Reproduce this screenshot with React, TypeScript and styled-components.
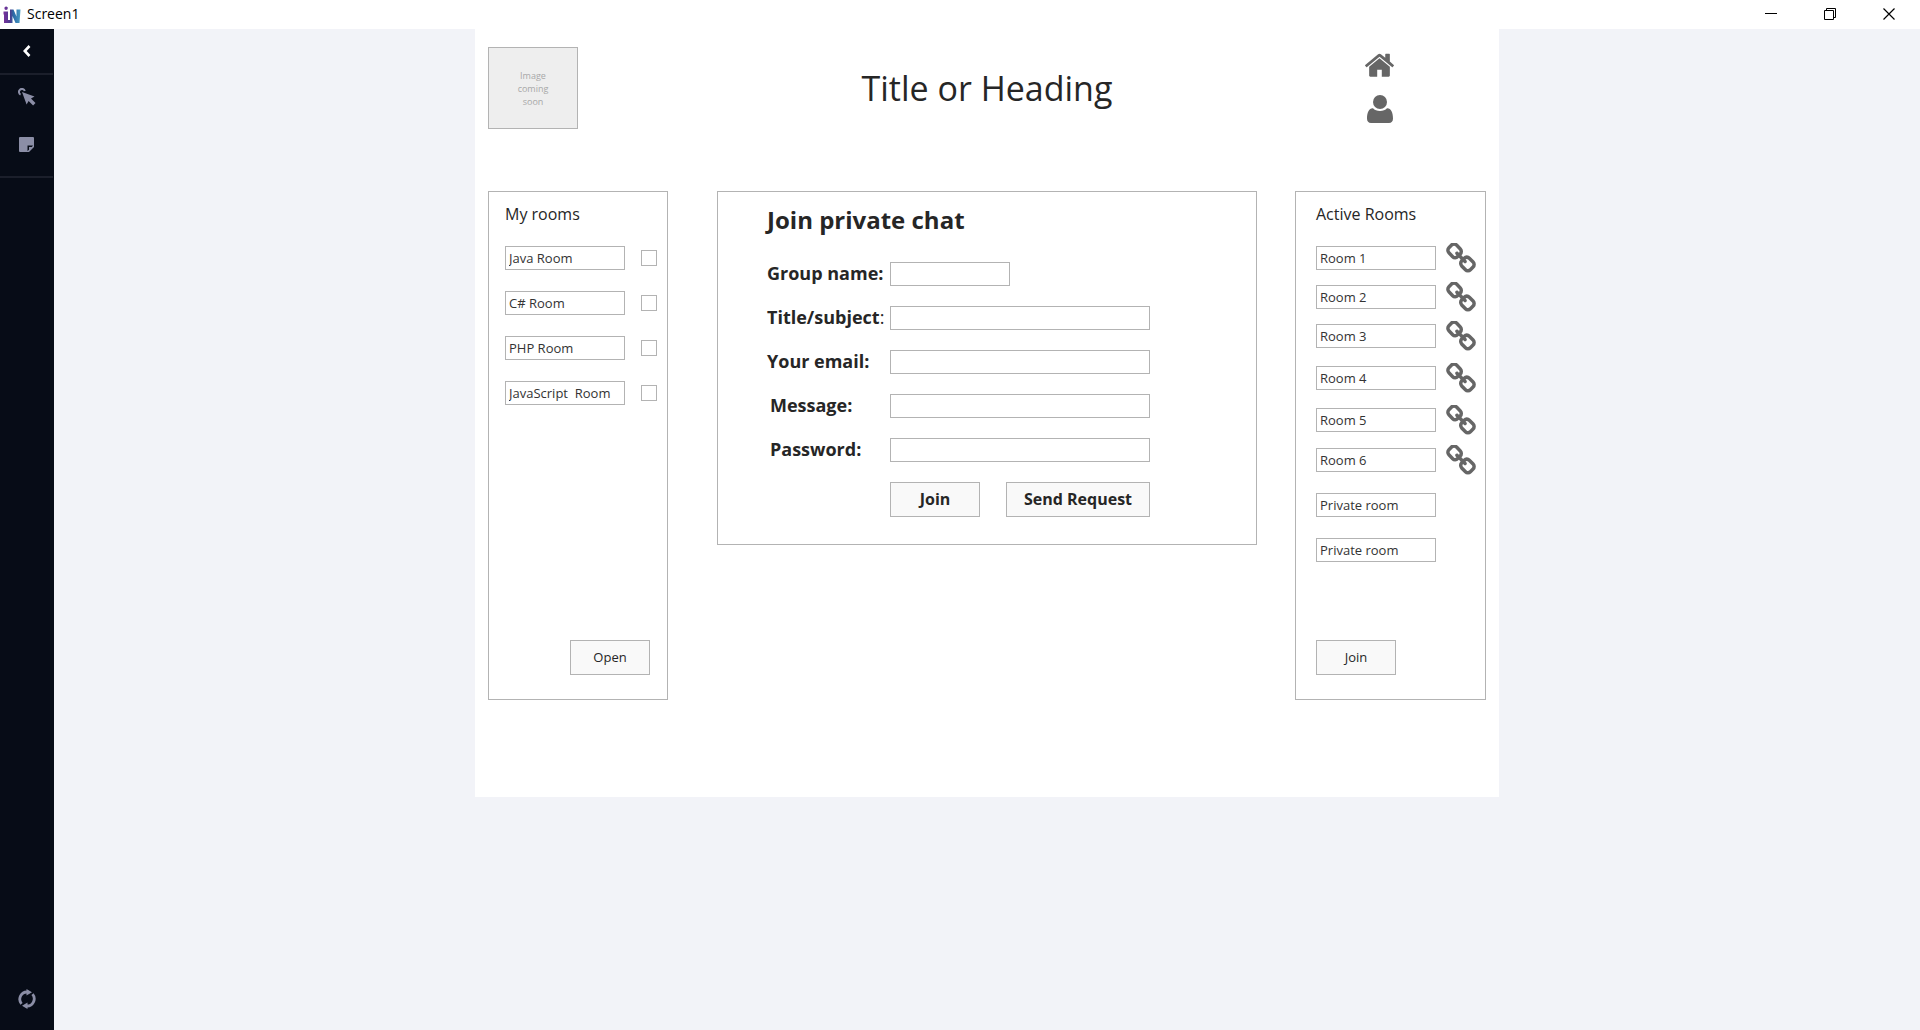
import React from "react";
import styled, { createGlobalStyle } from "styled-components";

const colors = {
  line: "#b3b3b3",
  text: "#262626",
  soft: "#333333",
  icon: "#666666",
  rail: "#070c17",
  railIcon: "#8b8ea6",
  canvas: "#f2f3f8",
};

const GlobalStyle = createGlobalStyle`
  *, *::before, *::after { box-sizing: border-box; }
  body {
    margin: 0;
    background: ${colors.canvas};
    color: ${colors.text};
    font-family: "Open Sans", "Noto Sans", sans-serif;
  }
  h1, h2 { margin: 0; }
  button { font-family: inherit; color: inherit; cursor: pointer; }
  svg { display: block; }
`;

const Window = styled.div`
  display: flex;
  flex-direction: column;
  min-height: 100vh;
`;

const TitleBar = styled.header`
  display: flex;
  align-items: center;
  height: 29px;
  padding-left: 3px;
  background: #ffffff;
  color: #000000;
`;

const WindowName = styled.span`
  flex: 1;
  padding: 0 0 2px 6px;
  font-size: 14px;
  line-height: 20px;
`;

const WindowButton = styled.button`
  display: grid;
  place-items: center;
  width: 59px;
  height: 28px;
  padding: 0;
  border: 0;
  background: transparent;
`;

const WindowButtons = styled.div`
  display: flex;
  align-self: flex-start;
  padding-right: 2px;
`;

const Workspace = styled.div`
  display: flex;
  flex: 1;
`;

const Rail = styled.nav`
  display: flex;
  flex-direction: column;
  width: 54px;
  border-right: 1px solid ${colors.rail};
  background: ${colors.rail};
`;

const RailGroup = styled.div<{ $pad?: number }>`
  border-bottom: 2px solid #1b1f2b;
  padding-bottom: ${(p) => p.$pad ?? 0}px;
`;

const RailButton = styled.button<{ $height: number }>`
  display: grid;
  place-items: center;
  width: 100%;
  height: ${(p) => p.$height}px;
  padding: 0;
  border: 0;
  background: transparent;
`;

const RailFooter = styled.div`
  margin-top: auto;
  padding-bottom: 9px;
`;

const Stage = styled.main`
  flex: 1;
  min-width: 0;
`;

const Board = styled.div`
  max-width: 1024px;
  margin: 0 auto;
  padding: 18px 13px 97px;
  background: #ffffff;
`;

const BoardHeader = styled.div`
  display: grid;
  grid-template-columns: 1fr auto 1fr;
  align-items: center;
  margin-bottom: 62px;
`;

const Placeholder = styled.div`
  display: grid;
  place-items: center;
  width: 90px;
  height: 82px;
  padding: 0 24px;
  border: 1px solid ${colors.line};
  background: #eeeeee;
  color: #a8a8a8;
  font-size: 9px;
  line-height: 13px;
  text-align: center;
`;

const Title = styled.h1`
  font-size: 34px;
  font-weight: 400;
  line-height: 48px;
`;

const Shortcuts = styled.nav`
  display: flex;
  flex-direction: column;
  align-items: center;
  justify-self: end;
  gap: 18px;
  margin-right: 92px;
`;

const IconLink = styled.a`
  color: ${colors.icon};
`;

const Columns = styled.div`
  display: grid;
  grid-template-columns: 180px minmax(0, 1fr) 191px;
  align-items: start;
`;

const SidePanel = styled.section<{ $inset: number }>`
  display: flex;
  flex-direction: column;
  min-height: 509px;
  padding: 10px 0 24px ${(p) => p.$inset}px;
  border: 1px solid ${colors.line};
`;

const PanelTitle = styled.h2`
  margin-bottom: 20px;
  font-size: 16px;
  font-weight: 400;
  line-height: 24px;
`;

const RoomRow = styled.div<{ $gap: number }>`
  display: flex;
  align-items: center;
  height: 24px;
  margin-bottom: ${(p) => p.$gap}px;
`;

const TextInput = styled.input<{ $width: number }>`
  width: 100%;
  max-width: ${(p) => p.$width}px;
  height: 24px;
  padding: 0 3px;
  border: 1px solid ${colors.line};
  border-radius: 0;
  background: #ffffff;
  color: ${colors.soft};
  font-family: inherit;
  font-size: 13px;
`;

const CheckBox = styled.input`
  appearance: none;
  flex: none;
  width: 16px;
  height: 16px;
  margin: 0 0 0 16px;
  border: 1px solid ${colors.line};
  background: #ffffff;

  &:checked {
    background: ${colors.icon};
  }
`;

const ChainLink = styled(IconLink)`
  flex: none;
  margin-left: 10px;
`;

const PanelAction = styled.div<{ $end?: boolean }>`
  display: flex;
  margin-top: auto;
  justify-content: ${(p) => (p.$end ? "flex-end" : "flex-start")};
  padding-right: 17px;
`;

const Button = styled.button<{ $width: number; $strong?: boolean }>`
  width: ${(p) => p.$width}px;
  height: 35px;
  padding: 0 0 2px;
  border: 1px solid ${colors.line};
  background: #f9f9f9;
  font-size: ${(p) => (p.$strong ? 16 : 13)}px;
  font-weight: ${(p) => (p.$strong ? 700 : 400)};
`;

const ChatPanel = styled.section`
  margin: 0 38px 0 49px;
  padding: 12px 49px 27px;
  border: 1px solid ${colors.line};
`;

const ChatTitle = styled.h2`
  margin-bottom: 26px;
  font-size: 24px;
  font-weight: 700;
  line-height: 32px;
`;

const Form = styled.form`
  display: flex;
  flex-direction: column;
  gap: 20px;
`;

const Field = styled.div`
  display: grid;
  grid-template-columns: 123px minmax(0, 1fr);
  align-items: start;
`;

const Label = styled.label<{ $inset?: boolean }>`
  padding-left: ${(p) => (p.$inset ? 3 : 0)}px;
  font-size: 18px;
  font-weight: 700;
  line-height: 22px;
  white-space: nowrap;
`;

const Plain = styled.span`
  font-weight: 400;
`;

const FormActions = styled.div`
  display: flex;
  gap: 26px;
  padding-left: 123px;
`;

const Logo = () => (
  <svg width="18" height="18" viewBox="0 0 18 18" aria-hidden="true">
    <defs>
      <linearGradient id="brand" x1="0" x2="1" y1="0" y2="0">
        <stop offset="0" stopColor="#7a2f9c" />
        <stop offset="0.4" stopColor="#4a3d8e" />
        <stop offset="0.6" stopColor="#2b6ca8" />
        <stop offset="1" stopColor="#4a9cc4" />
      </linearGradient>
    </defs>
    <g fill="url(#brand)">
      <path d="M1.5 1.5Q3-.3 4.800 1.500Q5 3.800 3 4Q1 3.800 1.500 1.500ZM.5 5.500H5V14H7V3.500H10.500L13.500 10.500V3.500H17.500L16.500 17H12.500L9.500 10V17H1V8.500H.5Z" />
    </g>
  </svg>
);

const ChainIcon = () => (
  <svg width="30" height="30" viewBox="72 56 1648 1616" preserveAspectRatio="none" fill="currentColor" aria-hidden="true">
    <path d="M1520 1216q0-40-28-68l-208-208q-28-28-68-28-42 0-72 32 3 3 19 18.500t21.500 21.500 15 19 13 25.500 3.500 27.500q0 40-28 68t-68 28q-15 0-27.500-3.500t-25.500-13-19-15-21.500-21.500-18.500-19q-33 31-33 73 0 40 28 68l206 207q27 27 68 27 40 0 68-26l147-146q28-28 28-67zm-703-705q0-40-28-68l-206-207q-28-28-68-28-39 0-68 27l-147 146q-28 28-28 67 0 40 28 68l208 208q27 27 68 27 42 0 72-31-3-3-19-18.500t-21.500-21.500-15-19-13-25.500-3.500-27.500q0-40 28-68t68-28q15 0 27.500 3.500t25.500 13 19 15 21.500 21.500 18.500 19q33-31 33-73zm895 705q0 120-85 203l-147 146q-83 83-203 83-121 0-204-85l-206-207q-83-83-83-203 0-123 88-209l-88-88q-86 88-208 88-120 0-204-84l-208-208q-84-84-84-204t85-203l147-146q83-83 203-83 121 0 204 85l206 207q83 83 83 203 0 123-88 209l88 88q86-88 208-88 120 0 204 84l208 208q84 84 84 204z" />
  </svg>
);

const HomeIcon = () => (
  <svg width="29" height="24" viewBox="89 232 1614 1304" fill="currentColor" aria-hidden="true">
    <path d="M1472 992v480q0 26-19 45t-45 19h-384v-384h-256v384h-384q-26 0-45-19t-19-45v-480q0-1 .5-3t.5-3l575-474 575 474q1 2 1 6zm223-69l-62 74q-8 9-21 11h-3q-13 0-21-7l-692-577-692 577q-12 8-24 7-13-2-21-11l-62-74q-8-10-7-23.500t11-21.500l719-599q32-26 76-26t76 26l244 204v-195q0-14 9-23t23-9h192q14 0 23 9t9 23v408l219 182q10 8 11 21.500t-7 23.500z" />
  </svg>
);

const UserIcon = () => (
  <svg width="26" height="28" viewBox="0 0 26 28" fill="currentColor" aria-hidden="true">
    <circle cx="13" cy="7" r="7" />
    <path d="M6 13.200C7.600 14.900 10 16 13 16S18.400 14.900 20 13.200C24 13 26 17.500 26 23.500C26 26.300 24.500 28 22 28H4C1.500 28 0 26.300 0 23.500C0 17.500 2 13 6 13.200Z" />
  </svg>
);

const BackIcon = () => (
  <svg width="8" height="12" viewBox="0 0 8 12" fill="none" stroke="#ffffff" strokeWidth="2.600" aria-hidden="true">
    <path d="M6.500 1L1.800 6L6.500 11" />
  </svg>
);

const PointerIcon = () => (
  <svg width="18" height="18" viewBox="0 0 18 18" fill={colors.railIcon} aria-hidden="true">
    <path d="M2.600 6.600A3 3 0 1 1 6.800 3" fill="none" stroke={colors.railIcon} strokeWidth="2" />
    <path d="M4 4L16.500 8.600L13 10.600L17.500 15.100L15.100 17.500L10.600 13L8.600 16.500Z" />
  </svg>
);

const NoteIcon = () => (
  <svg width="15" height="15" viewBox="0 0 15 15" aria-hidden="true">
    <path d="M1 0H14Q15 0 15 1V10L10 15H1Q0 15 0 14V1Q0 0 1 0Z" fill={colors.railIcon} />
    <path d="M8.500 14V8.500H14L12.800 10H10V12.800Z" fill={colors.rail} />
  </svg>
);

const SyncIcon = () => (
  <svg width="18" height="20" viewBox="0 0 18 20" aria-hidden="true">
    <g fill="none" stroke={colors.railIcon} strokeWidth="2.800">
      <path d="M3.500 14.800A7.200 7.200 0 0 1 9.500 3" />
      <path d="M14.500 5.200A7.200 7.200 0 0 1 8.500 17" />
    </g>
    <path d="M8.500 0L14 3.200L8.500 6.400ZM9.500 13.600L4 16.800L9.500 20Z" fill={colors.railIcon} />
  </svg>
);

const myRooms = ["Java Room", "C# Room", "PHP Room", "JavaScript  Room"];

const activeRooms = [
  { name: "Room 1", gap: 15, linked: true },
  { name: "Room 2", gap: 15, linked: true },
  { name: "Room 3", gap: 18, linked: true },
  { name: "Room 4", gap: 18, linked: true },
  { name: "Room 5", gap: 16, linked: true },
  { name: "Room 6", gap: 21, linked: true },
  { name: "Private room", gap: 21, linked: false },
  { name: "Private room", gap: 21, linked: false },
];

const fields = [
  { id: "group", label: "Group name:", width: 120, type: "text" },
  { id: "subject", label: "Title/subject", plain: ":", width: 260, type: "text" },
  { id: "email", label: "Your email:", width: 260, type: "email" },
  { id: "message", label: "Message:", width: 260, type: "text", inset: true },
  { id: "password", label: "Password:", width: 260, type: "password", inset: true },
];

export default function App() {
  return (
    <Window>
      <GlobalStyle />
      <TitleBar>
        <Logo />
        <WindowName>Screen1</WindowName>
        <WindowButtons>
          <WindowButton aria-label="Minimize">
            <svg width="12" height="12" viewBox="0 0 12 12" stroke="#000">
              <path d="M0 5.500H12" />
            </svg>
          </WindowButton>
          <WindowButton aria-label="Restore">
            <svg width="12" height="12" viewBox="0 0 12 12" fill="none" stroke="#000">
              <path d="M.5 2.500H9.500V11.500H.5ZM2.500 2.500V.5H11.500V9.500H9.500" />
            </svg>
          </WindowButton>
          <WindowButton aria-label="Close">
            <svg width="12" height="12" viewBox="0 0 12 12" stroke="#000" strokeWidth="1.200">
              <path d="M.5 .5L11.500 11.500M11.500 .5L.5 11.500" />
            </svg>
          </WindowButton>
        </WindowButtons>
      </TitleBar>

      <Workspace>
        <Rail aria-label="Tools">
          <RailGroup>
            <RailButton $height={44} aria-label="Back"><BackIcon /></RailButton>
          </RailGroup>
          <RailGroup $pad={7}>
            <RailButton $height={44} aria-label="Interact"><PointerIcon /></RailButton>
            <RailButton $height={50} aria-label="Notes"><NoteIcon /></RailButton>
          </RailGroup>
          <RailFooter>
            <RailButton $height={44} aria-label="Refresh"><SyncIcon /></RailButton>
          </RailFooter>
        </Rail>

        <Stage>
          <Board>
            <BoardHeader>
              <Placeholder>Image coming soon</Placeholder>
              <Title>Title or Heading</Title>
              <Shortcuts aria-label="Shortcuts">
                <IconLink href="#home" aria-label="Home"><HomeIcon /></IconLink>
                <IconLink href="#profile" aria-label="Profile"><UserIcon /></IconLink>
              </Shortcuts>
            </BoardHeader>

            <Columns>
              <SidePanel $inset={16}>
                <PanelTitle>My rooms</PanelTitle>
                {myRooms.map((room) => (
                  <RoomRow key={room} $gap={21}>
                    <TextInput $width={120} defaultValue={room} aria-label={room} />
                    <CheckBox type="checkbox" aria-label={`Select ${room}`} />
                  </RoomRow>
                ))}
                <PanelAction $end>
                  <Button type="button" $width={80}>Open</Button>
                </PanelAction>
              </SidePanel>

              <ChatPanel>
                <ChatTitle>Join private chat</ChatTitle>
                <Form>
                  {fields.map((f) => (
                    <Field key={f.id}>
                      <Label htmlFor={f.id} $inset={f.inset}>
                        {f.label}
                        {f.plain && <Plain>{f.plain}</Plain>}
                      </Label>
                      <TextInput id={f.id} type={f.type} $width={f.width} />
                    </Field>
                  ))}
                  <FormActions>
                    <Button type="button" $width={90} $strong>Join</Button>
                    <Button type="button" $width={144} $strong>Send Request</Button>
                  </FormActions>
                </Form>
              </ChatPanel>

              <SidePanel $inset={20}>
                <PanelTitle>Active Rooms</PanelTitle>
                {activeRooms.map((room, i) => (
                  <RoomRow key={i} $gap={room.gap}>
                    <TextInput $width={120} defaultValue={room.name} aria-label={room.name} />
                    {room.linked && (
                      <ChainLink href={`#room-${i + 1}`} aria-label={`Link to ${room.name}`}>
                        <ChainIcon />
                      </ChainLink>
                    )}
                  </RoomRow>
                ))}
                <PanelAction>
                  <Button type="button" $width={80}>Join</Button>
                </PanelAction>
              </SidePanel>
            </Columns>
          </Board>
        </Stage>
      </Workspace>
    </Window>
  );
}
